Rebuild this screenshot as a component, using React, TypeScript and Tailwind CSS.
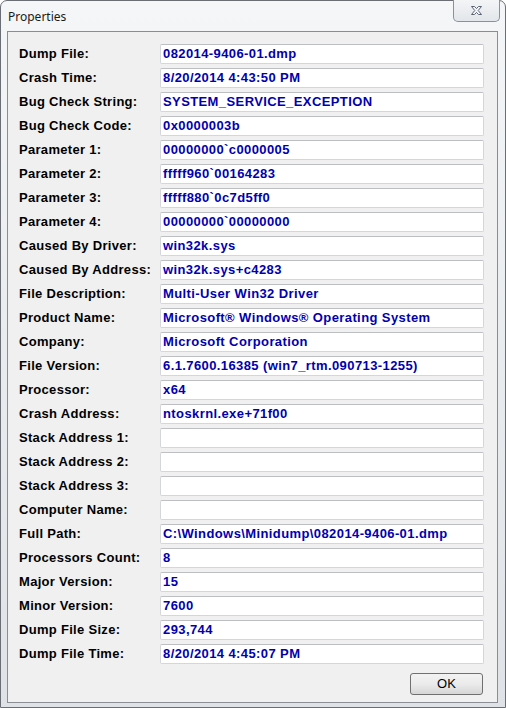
import React from "react";

const rows: [string, string][] = [
  ["Dump File:", "082014-9406-01.dmp"],
  ["Crash Time:", "8/20/2014 4:43:50 PM"],
  ["Bug Check String:", "SYSTEM_SERVICE_EXCEPTION"],
  ["Bug Check Code:", "0x0000003b"],
  ["Parameter 1:", "00000000`c0000005"],
  ["Parameter 2:", "fffff960`00164283"],
  ["Parameter 3:", "fffff880`0c7d5ff0"],
  ["Parameter 4:", "00000000`00000000"],
  ["Caused By Driver:", "win32k.sys"],
  ["Caused By Address:", "win32k.sys+c4283"],
  ["File Description:", "Multi-User Win32 Driver"],
  ["Product Name:", "Microsoft® Windows® Operating System"],
  ["Company:", "Microsoft Corporation"],
  ["File Version:", "6.1.7600.16385 (win7_rtm.090713-1255)"],
  ["Processor:", "x64"],
  ["Crash Address:", "ntoskrnl.exe+71f00"],
  ["Stack Address 1:", ""],
  ["Stack Address 2:", ""],
  ["Stack Address 3:", ""],
  ["Computer Name:", ""],
  ["Full Path:", "C:\\Windows\\Minidump\\082014-9406-01.dmp"],
  ["Processors Count:", "8"],
  ["Major Version:", "15"],
  ["Minor Version:", "7600"],
  ["Dump File Size:", "293,744"],
  ["Dump File Time:", "8/20/2014 4:45:07 PM"],
];

export default function App() {
  return (
    <div className="w-[506px] h-[708px] overflow-hidden bg-white">
      <div className="relative w-[506px] h-[708px] rounded-t-[7px] border border-[#6b6f75] bg-gradient-to-b from-[#f4f6f8] via-[#e9ecef] to-[#dfe3e7] flex flex-col">
        {/* title bar */}
        <div className="h-[30px] flex items-start pl-[7px] pt-[8px] text-[12px] text-[#1a1a1a] [font-family:'Noto_Sans','Liberation_Sans',sans-serif] leading-[16px]">
          Properties
        </div>
        <div className="absolute top-[-1px] right-[5px] w-[47px] h-[22px] rounded-b-[5px] border border-[#8c9199] border-t-0 bg-gradient-to-b from-[#f3f5f7] to-[#e3e6ea] flex items-center justify-center">
          <svg width="13" height="11" viewBox="0 0 13 11">
            <path
              d="M1.5 1.5 H4.5 L6.5 3.6 L8.5 1.5 H11.5 L8.2 5.5 L11.5 9.5 H8.5 L6.5 7.4 L4.5 9.5 H1.5 L4.8 5.5 Z"
              fill="#f4f6fa"
              stroke="#5b6372"
              strokeWidth="1"
              strokeLinejoin="round"
            />
          </svg>
        </div>
        {/* client area */}
        <div className="ml-[6px] mr-[7px] mb-[4px] flex-1 border border-[#8a8e94] bg-[#f0f0f0] flex flex-col pt-[12px] pl-[11px] pr-[13px] [font-family:'Liberation_Sans',Arial,sans-serif]">
          <div className="grid grid-cols-[141px_1fr] gap-y-[4px]">
            {rows.map(([label, value]) => (
              <React.Fragment key={label}>
                <div className="h-[20px] flex items-center text-[13px] font-bold text-black tracking-[0.3px] whitespace-nowrap">
                  {label}
                </div>
                <div className="h-[20px] flex items-center bg-white border border-[#d4d6da] border-t-[#bcbfc4] rounded-[2px] pl-[2px] text-[13px] font-bold text-[#0000b0] tracking-[0.4px] whitespace-nowrap overflow-hidden">
                  {value}
                </div>
              </React.Fragment>
            ))}
          </div>
          <div className="flex justify-end mt-[9px] pr-[1px]">
            <div className="w-[73px] h-[22px] rounded-[3px] border border-[#707070] bg-gradient-to-b from-[#f2f2f2] via-[#ebebeb] to-[#d6d6d6] flex items-center justify-center text-[13px] text-black [font-family:'Liberation_Sans',Arial,sans-serif]">
              OK
            </div>
          </div>
        </div>
      </div>
    </div>
  );
}
